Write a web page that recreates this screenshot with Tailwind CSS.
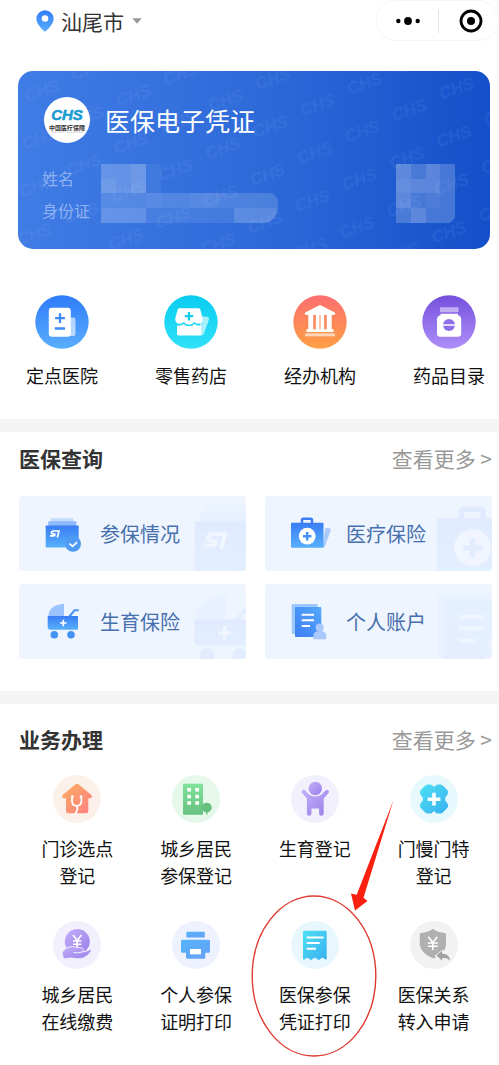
<!DOCTYPE html>
<html lang="zh-CN">
<head>
<meta charset="utf-8">
<meta name="viewport" content="width=device-width, initial-scale=1">
<title>医保服务</title>
<script src="https://cdn.jsdelivr.net/npm/@tailwindcss/browser@4"></script>
</head>
<body class="bg-white text-[#111] font-['Noto_Sans_CJK_SC',sans-serif] overflow-x-hidden">

<!-- shared gradients and symbols -->
<svg class="absolute w-0 h-0" aria-hidden="true">
  <defs>
    <linearGradient id="blueV" x1="0" y1="0" x2="0" y2="1"><stop offset="0" stop-color="#2f7bfa"/><stop offset="1" stop-color="#5aaefd"/></linearGradient>
    <linearGradient id="cyanV" x1="0" y1="0" x2="0" y2="1"><stop offset="0" stop-color="#08cdf0"/><stop offset="1" stop-color="#2fe0f8"/></linearGradient>
    <linearGradient id="orangeV" x1="0" y1="0" x2="0" y2="1"><stop offset="0" stop-color="#fd6f70"/><stop offset="1" stop-color="#fda045"/></linearGradient>
    <linearGradient id="purpleV" x1="0" y1="0" x2="0" y2="1"><stop offset="0" stop-color="#7450dc"/><stop offset="1" stop-color="#ae8ff8"/></linearGradient>
    <linearGradient id="cardBlue" x1="0" y1="0" x2="0" y2="1"><stop offset="0" stop-color="#3a7df5"/><stop offset="1" stop-color="#57b0fb"/></linearGradient>
    <linearGradient id="pageBlue" x1="1" y1="0" x2="0" y2="1"><stop offset="0" stop-color="#54a8fc"/><stop offset="1" stop-color="#3d7ef5"/></linearGradient>
    <linearGradient id="peach" x1="0" y1="0" x2="1" y2="1"><stop offset="0" stop-color="#fdae62"/><stop offset="1" stop-color="#fd7f80"/></linearGradient>
    <linearGradient id="green" x1="0" y1="0" x2="0" y2="1"><stop offset="0" stop-color="#7fe29a"/><stop offset="1" stop-color="#67c27f"/></linearGradient>
    <linearGradient id="violet" x1="0" y1="0" x2="1" y2="1"><stop offset="0" stop-color="#c2b0fa"/><stop offset="1" stop-color="#9a7fe8"/></linearGradient>
    <linearGradient id="aqua" x1="0" y1="0" x2="1" y2="1"><stop offset="0" stop-color="#4fe0f3"/><stop offset="1" stop-color="#37b0f0"/></linearGradient>
    <linearGradient id="sky" x1="0" y1="0" x2="1" y2="1"><stop offset="0" stop-color="#56b4fb"/><stop offset="1" stop-color="#66a0f8"/></linearGradient>

    <symbol id="folder" viewBox="0 0 40 40">
      <rect x="5.700" y="4.200" width="22.500" height="8" fill="#c3dbfd"/>
      <rect x="3.300" y="7.200" width="28" height="6" fill="#8ebafc"/>
      <rect x=".7" y="11.500" width="33" height="22" rx=".7" fill="url(#cardBlue)"/>
      <path d="M13.500 17H8.300q-1.500 0-1.800 1.300t1 1.500l2 .3q.7.200.4 1-.2.800-1.200.8H5M11.200 17H14l-1.700 6.500" fill="none" stroke="#fff" stroke-width="1.700"/>
      <circle cx="28" cy="29.800" r="8" fill="#4f9bf3"/>
      <path d="M24.500 29.600l3 2.700 4.600-4.200" fill="none" stroke="#fff" stroke-width="1.700"/>
    </symbol>
    <symbol id="medkit" viewBox="0 0 40 40">
      <path d="M34 14.500q6-2 5.500 2.500l-5.500 15q-.8 1.800-2.500 1.800z" fill="#a9cafc"/>
      <path d="M11 9.500V6.200q0-1.500 1.500-1.500h7q1.500 0 1.500 1.500v3.300" fill="none" stroke="#3a7df5" stroke-width="2.500"/>
      <rect x="0" y="8.800" width="32.500" height="25" rx="1" fill="url(#cardBlue)"/>
      <circle cx="16.200" cy="22.200" r="8.400" fill="#fff"/>
      <path d="M16.200 17.900v8.600M11.900 22.200h8.600" stroke="#4390f8" stroke-width="2.400"/>
    </symbol>
    <symbol id="pram" viewBox="0 0 40 40">
      <path d="M19 1.700V14H3.300Q3.800 3 19 1.700z" fill="#9cc4fc"/>
      <path d="M24 15l5.500-6.700h4.200" fill="none" stroke="#4b92f7" stroke-width="2"/>
      <path d="M2.700 14H33v12.700q0 1-1 1H5.500q-2.800 0-2.800-3z" fill="url(#cardBlue)"/>
      <path d="M18.300 17.700v6.600M15 21h6.600" stroke="#fff" stroke-width="1.700"/>
      <circle cx="9.300" cy="32.700" r="3.800" fill="#4392f6"/><circle cx="26" cy="32.700" r="3.800" fill="#4392f6"/>
    </symbol>
    <symbol id="account" viewBox="0 0 40 40">
      <rect x=".7" y="2" width="26" height="30" rx="1" fill="#9cc8fd"/>
      <rect x="4" y="5" width="26.300" height="30" rx="1" fill="url(#pageBlue)"/>
      <path d="M10.700 12.700H23M10.700 18.300H23M10.700 24H19" stroke="#fff" stroke-width="1.900"/>
      <circle cx="28.700" cy="25.500" r="4" fill="#a9c9fd"/>
      <path d="M22.300 37.300v-3.500q0-4.800 6.500-4.800t6.500 4.800v2q0 1.500-1.500 1.500z" fill="#a9c9fd"/>
    </symbol>
  </defs>
</svg>

<header class="flex items-start justify-between pl-9">
  <button type="button" class="flex items-center pt-[3px]">
    <svg class="w-[18px] h-[22px]" viewBox="0 0 18 22"><path d="M9 .3a8.600 8.600 0 0 1 8.600 8.600C17.600 14 12 19 9 21.700 6 19 .4 14 .4 8.900A8.600 8.600 0 0 1 9 .3z" fill="url(#blueV)"/><circle cx="9" cy="8.500" r="3.300" fill="#fff"/></svg>
    <span class="ml-[7px] text-[21px] leading-9 text-[#333]">汕尾市</span>
    <svg class="ml-2 w-[10px] h-[6px]" viewBox="0 0 10 6"><path d="M.3.300h9.400L5 5.700z" fill="#999"/></svg>
  </button>
  <div class="flex w-[123px] h-[41px] items-center rounded-full border border-[#f5f5f5]">
    <button type="button" aria-label="更多" class="flex w-[61px] justify-center">
      <svg class="w-[26px] h-[10px]" viewBox="0 0 26 10"><circle cx="3.300" cy="5" r="2.200"/><circle cx="13" cy="5" r="3.900"/><circle cx="22.700" cy="5" r="2.200"/></svg>
    </button>
    <span class="w-px h-6 bg-[#e2e2e2]"></span>
    <button type="button" aria-label="关闭" class="flex flex-1 justify-center pl-1">
      <svg class="w-6 h-6" viewBox="0 0 24 24"><circle cx="12" cy="12" r="10" fill="none" stroke="#000" stroke-width="2.800"/><circle cx="12" cy="12" r="4" fill="#000"/></svg>
    </button>
  </div>
</header>

<main>
  <section class="relative ml-[18px] mr-[9px] mt-[30px] overflow-hidden rounded-[15px] bg-linear-to-r from-[#407ce5] via-[#2e6bd9] to-[#1350ca] px-6 pt-[26px] pb-[23px] text-white">
    <svg class="absolute inset-0 w-full h-full" aria-hidden="true">
      <defs>
        <pattern id="mark" width="92" height="48" patternUnits="userSpaceOnUse" patternTransform="translate(51 -14) rotate(3)">
          <g font-family="Liberation Sans" font-size="17" font-weight="700" font-style="italic" fill="#a9bdf5" fill-opacity=".09">
            <text transform="translate(6 23) rotate(-22)">CHS</text>
            <text transform="translate(52 47) rotate(-22)">CHS</text>
          </g>
        </pattern>
      </defs>
      <rect width="100%" height="100%" fill="url(#mark)"/>
    </svg>
    <div class="relative flex items-center gap-[15px] pl-0.5">
      <svg class="w-[46px] h-[46px]" viewBox="0 0 46 46" role="img" aria-label="中国医疗保障">
        <circle cx="23" cy="23" r="23" fill="#fff"/>
        <text x="23" y="23" text-anchor="middle" font-family="Liberation Sans" font-size="15" font-weight="700" font-style="italic" fill="#1c9bd0" stroke="#1c9bd0" stroke-width=".6">CHS</text>
        <text x="23" y="33" text-anchor="middle" font-family="Noto Sans CJK SC" font-size="6" font-weight="700" fill="#333">中国医疗保障</text>
        <path d="M7 35.200h32" stroke="#aaa" stroke-width=".6" stroke-dasharray="1.500 .5"/>
      </svg>
      <h1 class="text-[25px] leading-9">医保电子凭证</h1>
    </div>
    <div class="relative mt-[19px] flex items-start">
      <dl class="w-[59px] text-base leading-8 text-[#8fb2f2]">
        <dt>姓名</dt>
        <dt>身份证</dt>
      </dl>
      <svg class="mt-0.5 w-[177px] h-[59px]" viewBox="0 0 177 59" fill="#fff" aria-label="已隐藏">
        <g fill-opacity=".22"><path d="M0 0h45v29H0zM0 44h45v15H0zM133 44h44q-3 15-15 15h-29z"/></g>
        <path d="M30 0h15v29H30zM0 15h15v14H0z" fill-opacity=".07"/>
        <path d="M45 0h15v29H45z" fill-opacity=".05"/>
        <path d="M0 29h171q6 4 6 10v5H0z" fill-opacity=".15"/>
        <path d="M45 29h15v15H45zM89 29h29v15H89z" fill-opacity=".04"/>
        <path d="M45 44h88v15H45z" fill-opacity=".09"/>
      </svg>
      <svg class="mt-0.5 ml-auto mr-[11px] w-[59px] h-[59px]" viewBox="0 0 59 59" fill="#fff" aria-label="已隐藏">
        <path d="M0 0h59v54l-5 5H0z" fill-opacity=".2"/>
        <path d="M0 0h15v44H0zM30 0h14v29H30zM15 15h15v14H15zM15 44h15v15H15z" fill-opacity=".11"/>
        <path d="M0 15h15v14H0zM30 29h14v15H30z" fill-opacity=".04"/>
      </svg>
    </div>
  </section>

  <nav class="mt-[46px] flex justify-between pl-[26px] pr-[14px] pb-[30px] text-[18px] leading-7">
    <a href="#" class="flex flex-col items-center gap-3">
      <svg class="w-[54px] h-[54px]" viewBox="0 0 54 54"><circle cx="27" cy="27" r="26.700" fill="url(#blueV)"/><path d="M35 22.500h3.500q2 0 2 2v14.500q0 2-2 2H35z" fill="#fff" fill-opacity=".6"/><rect x="13.800" y="12.800" width="22" height="29" rx="3" fill="#fff"/><path d="M25 18.200v9.800M20.100 23.100h9.800M19.800 33.500h10.200" stroke="#3e8afa" stroke-width="2.300"/></svg>
      <span>定点医院</span>
    </a>
    <a href="#" class="flex flex-col items-center gap-3">
      <svg class="w-[54px] h-[54px]" viewBox="0 0 54 54"><circle cx="27" cy="27" r="26.700" fill="url(#cyanV)"/><path d="M37.500 21.300l5.500.5q2.800.5 1.900 3L40 38.500q-.8 1.900-2.500 1.900H34z" fill="#fff" fill-opacity=".6"/><path d="M15.500 13.300h18.800q1.500 0 2 1.300l2.300 8.900q0 5.300-4.200 5.300-3.100 0-4.200-2-1.600 2.800-5.200 2.800t-5.200-2.800q-1.300 2-4.300 2-4.300 0-4.300-5.300l2.500-8.900q.4-1.300 1.800-1.300z" fill="#fff"/><path d="M13 30.700q4.300.6 6.700-1.700 2 2.300 5.300 2.300t5.300-2.300q2.300 2.300 6.900 1.700v8q0 1.700-1.700 1.700H14.700q-1.700 0-1.700-1.700z" fill="#fff"/><path d="M25 17v8.400M20.800 21.200h8.400" stroke="#18cdec" stroke-width="2.300"/></svg>
      <span>零售药店</span>
    </a>
    <a href="#" class="flex flex-col items-center gap-3">
      <svg class="w-[54px] h-[54px]" viewBox="0 0 54 54"><circle cx="27" cy="27" r="26.700" fill="url(#orangeV)"/><g fill="#fff"><path d="M27 10l14.500 7.200q.7.400.7 1.300 0 1.500-1.500 1.500H13.300q-1.500 0-1.500-1.500 0-.9.700-1.300z"/><path d="M15.300 20h4.900v15h-4.900zM22.800 20h3.700v15h-3.700zM27.500 20h3.700v15h-3.700zM33.800 20h4.900v15h-4.900zM13.500 34.300h27V37h-27z"/><path d="M12 38.300h30v3H12z" fill-opacity=".6"/></g></svg>
      <span>经办机构</span>
    </a>
    <a href="#" class="flex flex-col items-center gap-3">
      <svg class="w-[54px] h-[54px]" viewBox="0 0 54 54"><circle cx="27" cy="27" r="26.700" fill="url(#purpleV)"/><rect x="18" y="12.200" width="18.500" height="5" rx=".8" fill="#fff" fill-opacity=".5"/><path d="M18.500 18.800h17.500v1.500q3.200.8 3.200 4v14.200q0 3.200-3.200 3.200H18.200q-3.200 0-3.200-3.200V24.300q0-3.200 3.500-4z" fill="#fff"/><circle cx="27" cy="30" r="6" fill="#8f6fe9"/><path d="M20.500 30h13" stroke="#fff" stroke-width="1.500"/></svg>
      <span>药品目录</span>
    </a>
  </nav>

  <div class="h-[13px] bg-[#f4f4f4]"></div>

  <section class="pl-[19px] pr-[7px] pb-8">
    <div class="mb-[10px] flex h-[54px] items-center justify-between text-[21px]">
      <h2 class="font-bold text-[#333]">医保查询</h2>
      <a href="#" class="text-[#999]">查看更多 &gt;</a>
    </div>
    <div class="grid grid-cols-2 gap-x-[19px] gap-y-[13px] text-[20px] text-[#4670ad]">
      <a href="#" class="relative flex h-[75px] items-center gap-[15px] overflow-hidden rounded-sm bg-[#eff5ff] pl-[26px]">
        <svg class="w-10 h-10 shrink-0"><use href="#folder"/></svg>
        <span>参保情况</span>
        <svg class="absolute left-[174px] -top-px w-[92px] h-[92px] opacity-8" aria-hidden="true"><use href="#folder"/></svg>
      </a>
      <a href="#" class="relative flex h-[75px] items-center gap-[15px] overflow-hidden rounded-sm bg-[#eff5ff] pl-[26px]">
        <svg class="w-10 h-10 shrink-0"><use href="#medkit"/></svg>
        <span>医疗保险</span>
        <svg class="absolute left-[172px] top-[3px] w-[88px] h-[88px] opacity-8" aria-hidden="true"><use href="#medkit"/></svg>
      </a>
      <a href="#" class="relative flex h-[75px] items-center gap-[15px] overflow-hidden rounded-sm bg-[#eff5ff] pl-[26px]">
        <svg class="w-10 h-10 shrink-0"><use href="#pram"/></svg>
        <span>生育保险</span>
        <svg class="absolute left-[170px] top-2 w-[78px] h-[78px] opacity-8" aria-hidden="true"><use href="#pram"/></svg>
      </a>
      <a href="#" class="relative flex h-[75px] items-center gap-[15px] overflow-hidden rounded-sm bg-[#eff5ff] pl-[26px]">
        <svg class="w-10 h-10 shrink-0"><use href="#account"/></svg>
        <span>个人账户</span>
        <svg class="absolute left-[171px] top-[6px] w-[84px] h-[84px] opacity-6" aria-hidden="true"><use href="#account"/></svg>
      </a>
    </div>
  </section>

  <div class="h-[13px] bg-[#f4f4f4]"></div>

  <section class="pt-[9px] pb-7">
    <div class="mb-2 flex h-[54px] items-center justify-between pl-[19px] pr-[7px] text-[21px]">
      <h2 class="font-bold text-[#333]">业务办理</h2>
      <a href="#" class="text-[#999]">查看更多 &gt;</a>
    </div>
    <div class="grid grid-cols-4 gap-y-8 pl-[18px] pr-[6px] text-center text-[18px] leading-[27px]">
      <a href="#" class="flex flex-col items-center gap-3">
        <svg class="w-12 h-12" viewBox="0 0 48 48"><circle cx="24" cy="24" r="24" fill="#fcf1ea"/><path d="M22.300 9.500q1.700-1.300 3.400 0l12.500 10.300q1.200 1.300.4 2.600-.5.900-2 .9h-1.300v12.500q0 2.500-2.500 2.500H15.500q-2.500 0-2.500-2.500V23.300h-1.600q-1.500 0-2-.9-.8-1.300.4-2.600z" fill="url(#peach)"/><path d="M20.700 21.500H19v4.500q0 4.800 4.700 4.800t4.700-4.800v-4.500h-1.700M23.900 30.800q1.300 3-.3 5.200-.9 1.300-.9 3" fill="none" stroke="#fff" stroke-width="1.800"/></svg>
        <span>门诊选点<br>登记</span>
      </a>
      <a href="#" class="flex flex-col items-center gap-3">
        <svg class="w-12 h-12" viewBox="0 0 48 48"><circle cx="24" cy="24" r="24" fill="#e6f8ea"/><rect x="11" y="8.700" width="20" height="31" rx="1" fill="url(#green)"/><path d="M15.300 13h3.700v3.500h-3.700zM23.300 13H27v3.500h-3.700zM15.300 19.700h3.700v3.500h-3.700zM23.300 19.700H27v3.500h-3.700zM15.300 26.200h3.700v3.500h-3.700zM23.300 26.200H27v3.500h-3.700z" fill="#fff"/><path d="M35 27.800a4.800 4.800 0 0 1 2.400 8.900l-1.800.6-.3 2.500h-1l-.5-2.500q-3.800-.8-3.800-4.700 0-4.800 5-4.800z" fill="#67bf7e"/></svg>
        <span>城乡居民<br>参保登记</span>
      </a>
      <a href="#" class="flex flex-col items-center gap-3">
        <svg class="w-12 h-12" viewBox="0 0 48 48"><circle cx="24" cy="24" r="24" fill="#f3f0fd"/><circle cx="24.300" cy="13.500" r="6.700" fill="url(#violet)"/><path d="M11.200 15.300q1.500-1.200 3 .3l4 4.200q6 3.500 12.200 0l4-4.200q1.500-1.500 3-.3 1.300 1.500 0 3l-4.700 5.200v15q0 2.300-2.300 2.300t-2.300-2.300V33.500h-7.600v5q0 2.300-2.300 2.300t-2.300-2.300v-15l-4.700-5.200q-1.300-1.500 0-3z" fill="url(#violet)"/></svg>
        <span>生育登记</span>
      </a>
      <a href="#" class="flex flex-col items-center gap-3">
        <svg class="w-12 h-12" viewBox="0 0 48 48"><circle cx="24" cy="24" r="24" fill="#e8f9fe"/><path d="M17.500 9.400h3q1.200.2 2.200 1.300l1.300 1.300 1.300-1.300q1-1.100 2.200-1.300h3q1.400.2 2.300 1.100l3.700 3.700q1.200 1 1.500 2.300.4 2-.8 3.500L35.500 22q-.9 2 0 4l1.700 2q1.200 1.500.8 3.500-.3 1.300-1.500 2.300l-3.700 3.700q-.9.900-2.300 1.100h-3q-1.200-.2-2.200-1.300L24 36l-1.300 1.300q-1 1.100-2.200 1.300h-3q-1.400-.2-2.300-1.100l-3.700-3.700q-1.200-1-1.500-2.300-.4-2 .8-3.500l1.700-2q.9-2 0-4l-1.700-2q-1.200-1.500-.8-3.500.3-1.300 1.500-2.300l3.700-3.700q.9-.9 2.300-1.100z" fill="url(#aqua)"/><path d="M24 17.800v12.800M17.600 24.200h12.800" stroke="#fff" stroke-width="3.500"/></svg>
        <span>门慢门特<br>登记</span>
      </a>
      <a href="#" class="flex flex-col items-center gap-3">
        <svg class="w-12 h-12" viewBox="0 0 48 48"><circle cx="24" cy="24" r="24" fill="#f3f0fd"/><circle cx="24.300" cy="20.500" r="12.500" fill="url(#violet)"/><path d="M20 14l4.200 5.500L28.400 14M24.200 19.500v8M20 20h8.400M20 23.300h8.400" fill="none" stroke="#fff" stroke-width="1.600"/><path d="M9 31.500q3-5 8-5.800 3.500-.3 6.500.5l4.500.6q2.300.5 2.500 2 0 1.500-1.500 2.200 4.500-.5 7.500-2.300 2.400-.7 1.800 1.300-3 5-8 7-3 1.200-7.500.5-5.500-1-8.500-.2L10.500 38z" fill="url(#violet)" stroke="#f3f0fd" stroke-width=".9"/><path d="M20.500 31.500q4.500 1 8.500-.5" fill="none" stroke="#f3f0fd" stroke-width="1"/></svg>
        <span>城乡居民<br>在线缴费</span>
      </a>
      <a href="#" class="flex flex-col items-center gap-3">
        <svg class="w-12 h-12" viewBox="0 0 48 48"><circle cx="24" cy="24" r="24" fill="#edf2fe"/><rect x="14.300" y="10.700" width="18.500" height="5.800" rx="1.200" fill="url(#sky)"/><path d="M10.200 18.700h26.600q1.200 0 1.200 1.200v10.600q0 1.200-1.200 1.200h-3.500v4.800q0 1.200-1.200 1.200H15.200q-1.200 0-1.200-1.200v-4.800h-3.800q-1.200 0-1.200-1.200V19.900q0-1.200 1.200-1.200z" fill="url(#sky)"/><path d="M18 28h11v5.300H18z" fill="#fff"/></svg>
        <span>个人参保<br>证明打印</span>
      </a>
      <a href="#" class="relative flex flex-col items-center gap-3">
        <svg class="w-12 h-12" viewBox="0 0 48 48"><circle cx="24" cy="24" r="24" fill="#e8f7fe"/><path d="M13 9.700h21.700q1 0 1 1v27.500q-1.500 1-2.300-.4-1.700-2.300-3.700 0-1.900 2.300-3.800 0-2-2.300-4 0-1.900 2.300-3.800 0-2-2.300-3.800 0-.8 1.400-2.300.4V10.700q0-1 1-1z" fill="url(#aqua)"/><path d="M15.700 16.500h17M15.700 22h13M15.700 27.700H25" stroke="#fff" stroke-width="1.900"/></svg>
        <span>医保参保<br>凭证打印</span>
        <!-- highlight: ring plus arrow -->
        <svg class="pointer-events-none absolute left-1/2 -top-[123px] -ml-[65px] w-[150px] h-[262px] max-w-none" viewBox="0 0 150 262" aria-hidden="true"><ellipse cx="64" cy="178" rx="61.800" ry="80" fill="none" stroke="#e03a30" stroke-width="1.400"/><path d="M143.500 2l-30 97.700 4 3.200L105 112.500l-4-17 5.700 1.200z" fill="#fb2110"/></svg>
      </a>
      <a href="#" class="flex flex-col items-center gap-3">
        <svg class="w-12 h-12" viewBox="0 0 48 48"><circle cx="24" cy="24" r="24" fill="#f2f2f2"/><path d="M22.800 7.700q5 3.700 12 4.200 1.200.2 1.200 1.600V24q-.3 2.700-1.700 5l-9.500 5.500 1 1.700q-1.500 1.500-3 1-11.300-5-13-13V13.500q0-1.400 1.200-1.600 7-.5 11.800-4.200z" fill="#b0b0b0"/><path d="M18.300 15.700l4.500 5.800 4.500-5.800M22.800 21.500V29M17.800 22h10M17.800 25.300h10" fill="none" stroke="#fff" stroke-width="1.600"/><path d="M25.800 34.200l6.700-5v3q7.500.3 8.300 8.500-3.300-3.700-8.300-3.300v3z" fill="#a3a3a3" stroke="#f2f2f2" stroke-width=".8"/></svg>
        <span>医保关系<br>转入申请</span>
      </a>
    </div>
  </section>
</main>
</body>
</html>
